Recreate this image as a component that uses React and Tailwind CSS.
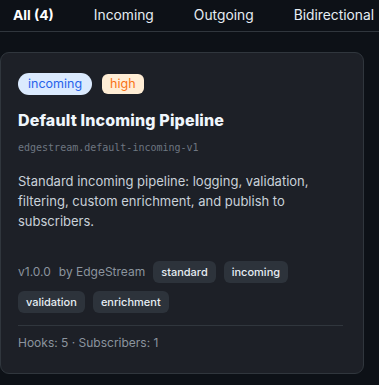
export default function App() {
  const tabs = ["All (4)", "Incoming", "Outgoing", "Bidirectional"];
  return (
    <div className="w-[379px] h-[385px] overflow-hidden bg-[#0d1117] font-['Inter',sans-serif]">
      <div className="flex h-[32px] border-b border-[#30363d] pl-[1px] gap-[16px] whitespace-nowrap overflow-hidden">
        {tabs.map((t, i) => (
          <div
            key={t}
            className={
              "px-3 flex items-center h-[31px] text-[13.8px] shrink-0 " +
              (i === 0 ? "font-bold text-white" : "text-[#e6edf3]")
            }
          >
            {t}
          </div>
        ))}
      </div>
      <div className="mt-[20px] w-[364px] rounded-[9px] border border-[#30363d] bg-[#1d2027] pl-[17px] pr-[20px] pt-[20px] pb-[20px]">
        <div className="flex items-center gap-[10px]">
          <span className="h-[22px] px-[10px] rounded-full bg-[#dbeafe] text-[#2563eb] text-[12.5px] flex items-center">incoming</span>
          <span className="h-[20px] px-[8px] rounded-[6px] bg-[#ffedd5] text-[#f97316] text-[12.5px] flex items-center">high</span>
        </div>
        <div className="mt-[13px] text-[16px] leading-[24px] font-extrabold text-[#f0f6fc] tracking-[0.15px]">
          Default Incoming Pipeline
        </div>
        <div className="mt-[9px] font-['DejaVu_Sans_Mono',monospace] text-[10px] leading-[14px] text-[#6e7681]">
          edgestream.default-incoming-v1
        </div>
        <p className="mt-[16px] text-[13px] leading-[20px] text-[#c9d1d9]">
          Standard incoming pipeline: logging, validation, filtering, custom enrichment, and publish to subscribers.
        </p>
        <div className="mt-[30px] flex flex-wrap items-center gap-2">
          <span className="text-[12px] text-[#8b949e]">v1.0.0</span>
          <span className="text-[12px] text-[#8b949e]">by EdgeStream</span>
          {["standard", "incoming", "validation", "enrichment"].map((t) => (
            <span key={t} className="h-[22px] px-[8px] rounded-[6px] bg-[#2d333b] text-[11px] font-medium text-[#e6edf3] flex items-center">
              {t}
            </span>
          ))}
        </div>
        <div className="mt-[12px] border-t border-[#30363d]" />
        <div className="pt-[7px] text-[12px] leading-[20px] text-[#8b949e]">Hooks: 5 · Subscribers: 1</div>
      </div>
    </div>
  );
}
